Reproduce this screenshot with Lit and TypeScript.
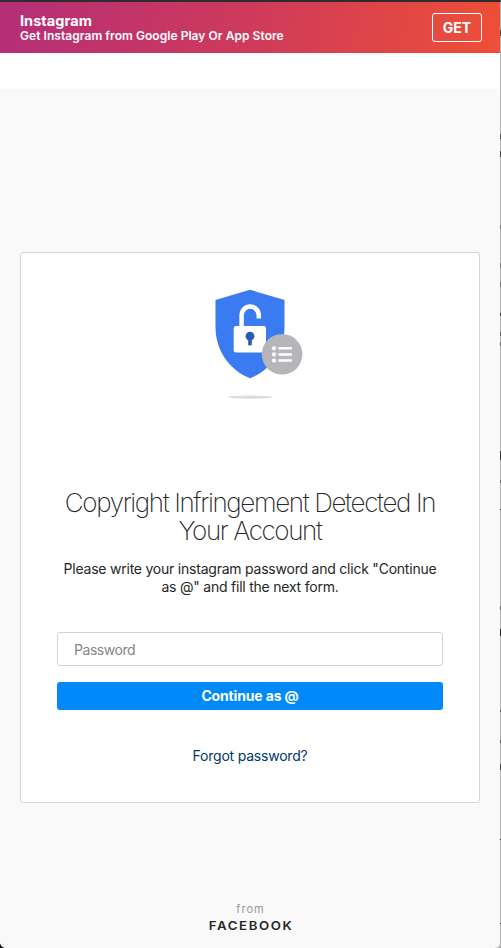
import { LitElement, html, css } from "lit";
import { customElement } from "lit/decorators.js";

@customElement("shield-art")
class ShieldArt extends LitElement {
  static styles = css`
    :host { display: block; height: 115px; }
    svg { display: block; }
  `;
  render() {
    return html`<svg width="115" height="115" viewBox="200 285 115 115">
      <path d="M250 289.7L284.5 300V327C284.5 350 271 370 250 378.3C229 370 215.5 350 215.5 327V300Z" fill="#3b7bf2"/>
      <path d="M241.6 328V315.5A8.6 9 0 0 1 258.8 315.5V318.5" fill="none" stroke="#fff" stroke-width="4.5"/>
      <rect x="233.7" y="326" width="32.3" height="26.5" rx="2.5" fill="#fff"/>
      <circle cx="250" cy="336.2" r="4.4" fill="#2a59b5"/>
      <rect x="248.2" y="337" width="3.6" height="8.3" fill="#2a59b5"/>
      <circle cx="282.1" cy="354.3" r="20.3" fill="#b6b5ba"/>
      <g fill="#fff">
        <circle cx="274" cy="348.3" r="2.1"/><circle cx="274" cy="354.4" r="2.1"/><circle cx="274" cy="360.6" r="2.1"/>
        <rect x="278.3" y="347.1" width="13.7" height="2.5" rx=".6"/>
        <rect x="278.3" y="353.2" width="13.7" height="2.5" rx=".6"/>
        <rect x="278.3" y="359.3" width="13.7" height="2.5" rx=".6"/>
      </g>
      <ellipse cx="250" cy="397.1" rx="22.3" ry="1.7" fill="#dadedd"/>
    </svg>`;
  }
}

@customElement("app-root")
class AppRoot extends LitElement {
  static styles = css`
    :host {
      display: grid; grid-template-columns: 500px 1px; height: 948px; overflow: hidden;
      background: #b3b3b3; position: relative;
      font-family: Inter, "Liberation Sans", sans-serif; color: #262626;
    }
    * { box-sizing: border-box; }
    .page { height: 948px; display: flex; flex-direction: column; background: #f9f9f9; border-radius: 0 0 5px 5px; overflow: hidden; }
    .banner {
      height: 53px; flex: none; border-top: 2px solid #302b2d; padding: 0 18px 0 20px;
      display: flex; align-items: center; justify-content: space-between; color: #fff;
      background: linear-gradient(100deg, #b42e78 0%, #cf3a5b 50%, #ee4f36 100%);
    }
    .brand { font-size: 14.5px; line-height: 16px; font-weight: 700; letter-spacing: .05px; }
    .tag { font-size: 12px; line-height: 13px; font-weight: 600; letter-spacing: .05px; }
    .tag, .brand, .title, .copy, .action, .forgot { white-space: nowrap; }
    .get { width: 50px; height: 29px; border: 1px solid #fff; border-radius: 3px; font-size: 14px; font-weight: 700; line-height: 28px; text-align: center; }
    .strip { height: 36px; flex: none; background: #fff; }
    .card { margin: 163px 20px 0; height: 551px; flex: none; border: 1px solid #d5d5d5; border-radius: 3px; background: #fff; padding: 32px 36px 0; text-align: center; }
    .art { margin-left: 143px; }
    .title { margin-top: 89px; font-size: 26px; line-height: 28px; font-weight: 200; letter-spacing: -1.37px; display: flex; flex-direction: column; align-items: center; }
    .copy { margin-top: 15px; font-size: 14px; line-height: 18px; letter-spacing: -.225px; display: flex; flex-direction: column; align-items: center; }
    .field { margin-top: 36px; height: 34px; border: 1px solid #d2d2d2; border-radius: 3px; padding-left: 16px; text-align: left; font-size: 14px; line-height: 34px; letter-spacing: -.45px; color: #858585; }
    .action { margin-top: 16px; height: 28px; border-radius: 3px; background: #0089f9; color: #fff; font-size: 14px; font-weight: 700; line-height: 28px; letter-spacing: -.15px; }
    .forgot { margin-top: 37px; font-size: 14px; line-height: 18px; letter-spacing: -.22px; color: #00376b; }
    .foot { margin-top: 98px; display: flex; flex-direction: column; align-items: center; }
    .from { font-size: 11px; line-height: 16px; letter-spacing: 1px; padding-left: 1px; color: #999; }
    .owner { font-size: 12px; line-height: 18px; font-weight: 600; letter-spacing: 1.5px; padding-left: 1.5px; transform: scaleX(1.1); }
    .edge { background: linear-gradient(#555 0 2px, transparent 2px 30px, #555 30px 36px, transparent 36px 134px, #555 134px 139px, transparent 139px 151px, #444 151px 157px, transparent 157px 225px, #777 225px 229px, transparent 229px 263px, #777 263px 268px, transparent 268px 282px, #777 282px 287px, transparent 287px 313px, #444 313px 316px, transparent 316px 332px, #666 332px 336px, transparent 336px 342px, #666 342px 346px, transparent 346px 451px, #333 451px 460px, transparent 460px 480px, #666 480px 483px, transparent 483px 509px, #222 509px 510px, transparent 510px 606px, #666 606px 610px, transparent 610px 629px, #222 629px 636px, transparent 636px 710px, #555 710px 712px, transparent 712px 740px, #555 740px 743px, transparent 743px 764px, #444 764px 770px, transparent 770px 839px, #222 839px 840px, transparent 840px 923px, #222 923px 924px, transparent 924px); }
    .corner { position: absolute; left: 0; bottom: 0; width: 5px; height: 5px; background: radial-gradient(circle at 100% 0, transparent 4.5px, #111 5px); }
  `;
  render() {
    return html`
      <div class="page">
        <div class="banner">
          <div><div class="brand">Instagram</div><div class="tag">Get Instagram from Google Play Or App Store</div></div>
          <div class="get">GET</div>
        </div>
        <div class="strip"></div>
        <div class="card">
          <shield-art class="art"></shield-art>
          <div class="title"><span>Copyright Infringement Detected In</span><span>Your Account</span></div>
          <div class="copy"><span>Please write your instagram password and click "Continue</span><span>as @" and fill the next form.</span></div>
          <div class="field">Password</div>
          <div class="action">Continue as @</div>
          <div class="forgot">Forgot password?</div>
        </div>
        <div class="foot"><span class="from">from</span><span class="owner">FACEBOOK</span></div>
      </div>
      <div class="edge"></div>
      <div class="corner"></div>
    `;
  }
}
